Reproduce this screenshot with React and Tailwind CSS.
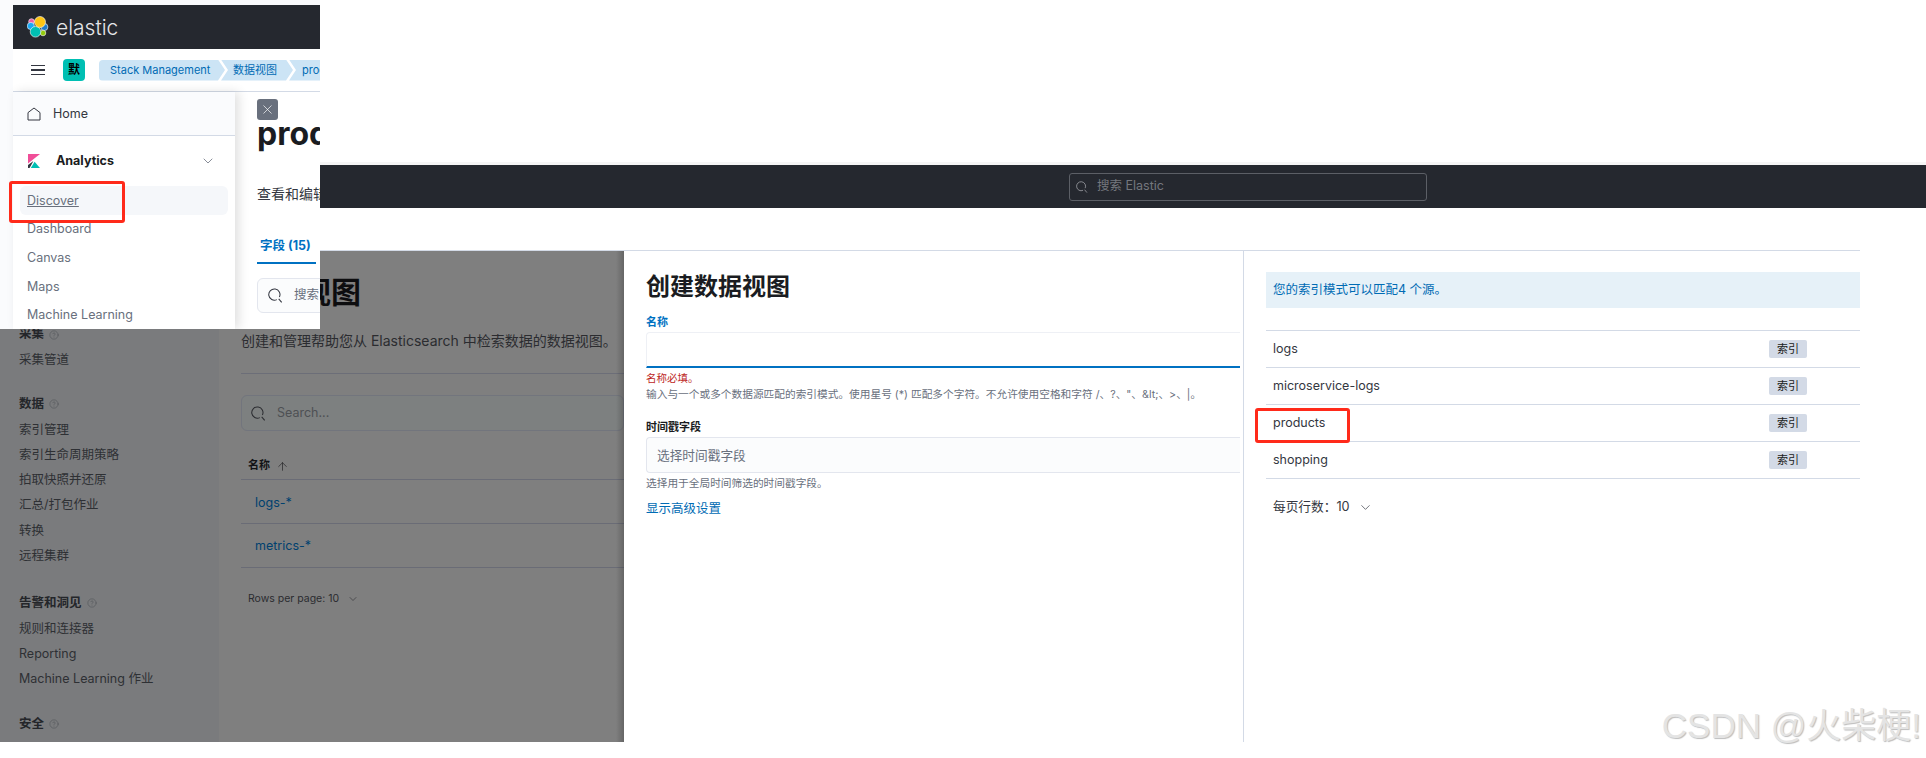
import React from 'react'
import { ArrowUp, ChevronDown, CircleHelp, X } from 'lucide-react'

const font = { fontFamily: 'Inter, "Noto Sans CJK SC", sans-serif' }

function SearchIcon({ className }) {
  return (
    <svg viewBox="0 0 16 16" fill="none" stroke="currentColor" strokeWidth="1.1" className={className}>
      <path d="M12.2 9.6A6 6 0 1 0 9.4 12.4" />
      <path d="M11.4 11.6L14.6 15.4" />
    </svg>
  )
}

function ElasticLogo() {
  return (
    <svg viewBox="0 0 22 22" className="w-[22px] h-[22px] shrink-0">
      <circle cx="4.5" cy="5.5" r="2.8" fill="#ef5fa7" stroke="#fff" strokeWidth="0.6" />
      <circle cx="3.8" cy="10" r="3.6" fill="#1ba9f5" stroke="#fff" strokeWidth="0.6" />
      <circle cx="17.3" cy="11" r="3.6" fill="#1f7ac9" stroke="#fff" strokeWidth="0.6" />
      <circle cx="16" cy="17" r="2.8" fill="#93c90e" stroke="#fff" strokeWidth="0.6" />
      <circle cx="8.5" cy="15.8" r="5.3" fill="#00bfb3" stroke="#fff" strokeWidth="0.6" />
      <circle cx="13" cy="6" r="5.5" fill="#fec514" stroke="#fff" strokeWidth="0.6" />
    </svg>
  )
}

function KibanaLogo() {
  return (
    <svg viewBox="0 0 12 14" className="w-[12px] h-[14px] shrink-0">
      <path d="M0 0H12L0 9.5Z" fill="#f04e98" />
      <path d="M0 11L5.4 6.9L1.6 14H0Z" fill="#343741" />
      <path d="M2.8 14L6.6 7.7L12 14Z" fill="#00bfb3" />
    </svg>
  )
}

function RedBox({ className }) {
  return <div className={`absolute z-20 border-[3px] border-[#ff2a1a] rounded-[3px] ${className}`} />
}

function TopLeftShot() {
  return (
    <div className="absolute left-0 top-0 w-[320px] h-[329px] pl-[13px] pt-[5px] bg-[#fafbfd] overflow-hidden z-20">
      <div className="flex flex-col h-full bg-white">
        <div className="h-[44px] shrink-0 bg-[#25282f] flex items-center pl-[14px] gap-[7px]">
          <ElasticLogo />
          <span className="text-[21px] font-light text-[#e6e7e9] leading-none">elastic</span>
        </div>
        <div className="h-[43px] shrink-0 border-b border-[#d3dae6] flex items-center pl-[18px] overflow-hidden">
          <div className="w-[14px] shrink-0 flex flex-col gap-[3px]">
            <div className="h-[1.5px] bg-[#343741]" />
            <div className="h-[1.5px] bg-[#343741]" />
            <div className="h-[1.5px] bg-[#343741]" />
          </div>
          <div className="ml-[18px] w-[22px] h-[22px] shrink-0 rounded-[4px] bg-[#00bfb3] flex items-center justify-center text-[12px] font-bold text-black">默</div>
          <div className="ml-[14px] flex shrink-0 items-center text-[11px] text-[#006bb4] whitespace-nowrap">
            <div className="h-[21px] pl-[11px] w-[126px] bg-[#cce4f5] rounded-l-[4px] flex items-center [clip-path:polygon(0_0,calc(100%-7px)_0,100%_50%,calc(100%-7px)_100%,0_100%)]">Stack Management</div>
            <div className="h-[21px] pl-[12px] w-[72px] -ml-[4px] bg-[#cce4f5] flex items-center [clip-path:polygon(0_0,calc(100%-7px)_0,100%_50%,calc(100%-7px)_100%,0_100%,7px_50%)]">数据视图</div>
            <div className="h-[21px] pl-[13px] w-[60px] -ml-[4px] bg-[#cce4f5] flex items-center [clip-path:polygon(0_0,100%_0,100%_100%,0_100%,7px_50%)]">products</div>
          </div>
        </div>
        <div className="flex flex-1 min-h-0">
          <div className="w-[222px] shrink-0 bg-white z-10 shadow-[4px_0_10px_rgba(0,0,0,0.12)]">
            <div className="h-[44px] pt-[1px] bg-[#fafbfd] border-b border-[#d3dae6] flex items-center pl-[14px] text-[12.5px] text-[#343741]">
              <svg viewBox="0 0 14 14" fill="none" stroke="#343741" strokeWidth="1" className="w-[14px] h-[14px]">
                <path d="M1 5.6L7 1L13 5.6V13H1Z" strokeLinejoin="round" />
              </svg>
              <span className="ml-[12px]">Home</span>
            </div>
            <div className="h-[50px] flex items-center pl-[15px] pr-[19px]">
              <KibanaLogo />
              <span className="ml-[16px] text-[12.5px] font-bold text-[#1a1c21] flex-1">Analytics</span>
              <ChevronDown className="w-[16px] h-[16px] text-[#69707d]" strokeWidth={1.2} />
            </div>
            <div className="mx-[7px] h-[29px] pt-[1px] bg-[#f5f7fa] rounded-[6px] flex items-center pl-[7px] text-[12.5px] text-[#69707d] underline">Discover</div>
            <div className="pl-[14px] text-[12.5px] text-[#69707d]">
              <div className="h-[29px] flex items-center">Dashboard</div>
              <div className="h-[29px] flex items-center">Canvas</div>
              <div className="h-[28px] flex items-center">Maps</div>
              <div className="h-[29px] flex items-center">Machine Learning</div>
            </div>
          </div>
          <div className="flex-1 min-w-0 pl-[22px] pt-[7px] overflow-hidden whitespace-nowrap">
            <div className="w-[21px] h-[21px] rounded-[3px] bg-[#69707d] flex items-center justify-center">
              <X className="w-[15px] h-[15px] text-white" strokeWidth={1.1} />
            </div>
            <div className="text-[32px] font-bold leading-[27px] text-[#1a1c21]">products</div>
            <div className="mt-[38px] text-[14px] leading-[18px] text-[#343741]">查看和编辑字段</div>
            <div className="mt-[33px] w-[59px] h-[28px] border-b-2 border-[#0071c2] pl-[3px] text-[12.5px] font-bold text-[#0071c2] leading-[20px]">字段 (15)</div>
            <div className="mt-[14px] w-[200px] h-[35px] border border-[#e3e6ee] rounded-[6px] bg-[#fbfcfd] flex items-center pl-[10px] text-[12.5px] text-[#69707d]">
              <SearchIcon className="w-[15px] h-[15px] text-[#343741]" />
              <span className="ml-[11px]">搜索</span>
            </div>
          </div>
        </div>
      </div>
      <RedBox className="left-[9px] top-[181px] w-[116px] h-[42px]" />
    </div>
  )
}

function GrayHeading({ children }) {
  return (
    <div className="h-[27px] flex items-center gap-[5px] text-[12.5px] font-bold text-[#24262a]">
      {children}
      <CircleHelp className="w-[10px] h-[10px] text-[#4f5155]" strokeWidth={1.3} />
    </div>
  )
}

function GrayItem({ children }) {
  return <div className="h-[25.2px] flex items-center text-[12.5px] text-[#2e3034] whitespace-nowrap">{children}</div>
}

function GrayShot() {
  return (
    <div className="absolute left-0 top-[251px] w-[624px] h-[491px] flex bg-[#7f7f7f] overflow-hidden z-0">
      <div className="w-[219px] shrink-0 bg-[#7a7b7d] pl-[19px] pt-[70px]">
        <GrayHeading>采集</GrayHeading>
        <GrayItem>采集管道</GrayItem>
        <div className="h-[17.5px]" />
        <GrayHeading>数据</GrayHeading>
        <GrayItem>索引管理</GrayItem>
        <GrayItem>索引生命周期策略</GrayItem>
        <GrayItem>拍取快照并还原</GrayItem>
        <GrayItem>汇总/打包作业</GrayItem>
        <GrayItem>转换</GrayItem>
        <GrayItem>远程集群</GrayItem>
        <div className="h-[21px]" />
        <GrayHeading>告警和洞见</GrayHeading>
        <GrayItem>规则和连接器</GrayItem>
        <GrayItem>Reporting</GrayItem>
        <GrayItem>Machine Learning 作业</GrayItem>
        <div className="h-[18.5px]" />
        <GrayHeading>安全</GrayHeading>
      </div>
      <div className="relative flex-1 min-w-0 pl-[22px] whitespace-nowrap">
        <div className="pt-[24px] text-[30px] font-bold leading-[34px] text-[#0d0d0f]">数据视图</div>
        <div className="mt-[23px] text-[14px] leading-[18px] text-[#2b2c30]">创建和管理帮助您从 Elasticsearch 中检索数据的数据视图。</div>
        <div className="mt-[23px] h-px bg-[#6c6e78]" />
        <div className="mt-[21px] h-[36px] border border-[#72757d] rounded-[6px] bg-[#7d8080] flex items-center pl-[9px] text-[12.5px] text-[#4e5054]">
          <SearchIcon className="w-[15px] h-[15px] text-[#2b2c30]" />
          <span className="ml-[11px]">Search...</span>
        </div>
        <div className="h-[49px] pl-[7px] pb-[6px] border-b border-[#6a6c76] flex items-end gap-[6px] text-[11px] font-bold text-[#121316]">
          名称
          <ArrowUp className="w-[13px] h-[13px]" strokeWidth={1.1} />
        </div>
        <div className="h-[44px] pl-[14px] pt-[3px] border-b border-[#6a6c76] flex items-center text-[12.5px] text-[#00416f]">logs-*</div>
        <div className="h-[44px] pl-[14px] pt-[2px] border-b border-[#6a6c76] flex items-center text-[12.5px] text-[#00416f]">metrics-*</div>
        <div className="mt-[24px] pl-[7px] flex items-center gap-[8px] text-[10.5px] leading-[14px] text-[#2b2c30]">
          Rows per page: 10
          <ChevronDown className="w-[12px] h-[12px]" strokeWidth={1.2} />
        </div>
        <div className="absolute right-0 top-0 bottom-0 w-[8px] bg-gradient-to-l from-black/20 to-transparent" />
      </div>
    </div>
  )
}

function SearchBarShot() {
  return (
    <div className="absolute left-[320px] top-[162px] w-[1606px] z-10">
      <div className="h-[3px] bg-[#f5f5f5]" />
      <div className="h-[43px] bg-[#25282f] flex items-center pl-[749px]">
        <div className="w-[358px] h-[28px] border border-[#5c5f66] rounded-[3px] flex items-center pl-[6px] text-[12.5px] text-[#74777e]">
          <SearchIcon className="w-[12px] h-[12px] text-[#9a9ca1]" />
          <span className="ml-[9px]">搜索 Elastic</span>
        </div>
      </div>
      <div className="h-[42px] bg-white" />
      <div className="w-[1540px] h-px bg-[#d3dae6]" />
    </div>
  )
}

function FormColumn() {
  return (
    <div className="w-[620px] shrink-0 border-r border-[#d3dae6] pl-[22px] pr-[3px] pt-[21px] overflow-hidden whitespace-nowrap">
      <div className="text-[24px] font-bold leading-[30px] text-[#1a1c21]">创建数据视图</div>
      <div className="mt-[13px] text-[11px] font-bold leading-[14px] text-[#0071c2]">名称</div>
      <div className="mt-[3px] h-[36px] bg-white border border-r-0 border-[#eef0f5] border-b-2 border-b-[#0071c2] rounded-tl-[4px]" />
      <div className="mt-[4px] text-[10.5px] leading-[14px] text-[#bd271e]">名称必填。</div>
      <div className="mt-[2px] text-[10.7px] leading-[14px] text-[#69707d]">{'输入与一个或多个数据源匹配的索引模式。使用星号 (*) 匹配多个字符。不允许使用空格和字符 /、?、"、&lt;、>、|。'}</div>
      <div className="mt-[18px] text-[11px] font-bold leading-[14px] text-[#1a1c21]">时间戳字段</div>
      <div className="mt-[3px] h-[36px] pt-[1px] bg-[#fbfcfd] border border-r-0 border-[#e3e6ee] rounded-l-[4px] flex items-center pl-[10px] text-[12.7px] text-[#69707d]">选择时间戳字段</div>
      <div className="mt-[4px] text-[10.7px] leading-[14px] text-[#69707d]">选择用于全局时间筛选的时间戳字段。</div>
      <div className="mt-[9px] text-[12.5px] leading-[18px] text-[#006bb4]">显示高级设置</div>
    </div>
  )
}

function SourceRow({ name }) {
  return (
    <div className="h-[37px] pl-[7px] pr-[53px] border-b border-[#d3dae6] flex items-center justify-between text-[12.5px] text-[#343741]">
      {name}
      <span className="w-[38px] h-[18px] rounded-[2px] bg-[#d3dae6] flex items-center justify-center text-[11px] text-[#1a1c21]">索引</span>
    </div>
  )
}

function SourcesColumn() {
  return (
    <div className="relative flex-1 min-w-0 pl-[22px] pt-[21px]">
      <div className="h-[36px] bg-[#e6f1f8] flex items-center pl-[7px] text-[12.5px] text-[#006bb4]">您的索引模式可以匹配4 个源。</div>
      <div className="mt-[22px] border-t border-[#d3dae6]">
        <SourceRow name="logs" />
        <SourceRow name="microservice-logs" />
        <SourceRow name="products" />
        <SourceRow name="shopping" />
      </div>
      <div className="mt-[20px] pl-[7px] flex items-center gap-[8px] text-[12.7px] leading-[16px] text-[#343741]">
        每页行数：10
        <ChevronDown className="w-[15px] h-[15px]" strokeWidth={1.1} />
      </div>
      <RedBox className="left-[11px] top-[157px] w-[95px] h-[35px]" />
    </div>
  )
}

function ModalShot() {
  return (
    <div className="absolute left-[624px] top-[251px] w-[1236px] h-[491px] flex bg-white z-10">
      <FormColumn />
      <SourcesColumn />
    </div>
  )
}

export default function App() {
  return (
    <div className="relative w-[1926px] h-[758px] bg-white overflow-hidden" style={font}>
      <GrayShot />
      <SearchBarShot />
      <ModalShot />
      <TopLeftShot />
      <div
        className="absolute right-[5px] top-[704px] text-[35px] leading-[44px] text-[#e4e4e4] whitespace-nowrap z-30 [text-shadow:1px_1px_1px_#bdbdbd]"
        style={{ fontFamily: '"Liberation Sans", "Noto Sans CJK SC", sans-serif' }}
      >
        CSDN @火柴梗!
      </div>
    </div>
  )
}
